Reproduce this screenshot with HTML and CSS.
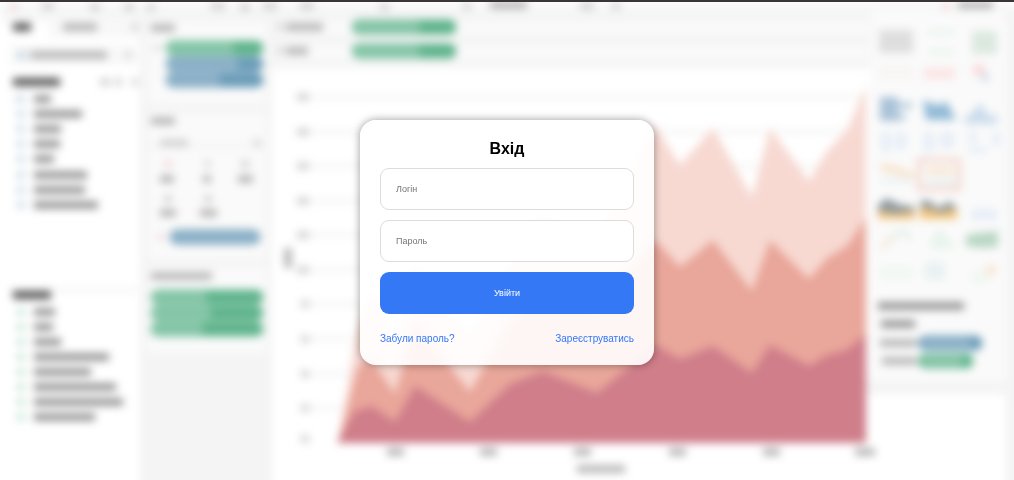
FILE: index.html
```html
<!DOCTYPE html>
<html lang="uk">
<head>
<meta charset="utf-8">
<meta name="viewport" content="width=device-width, initial-scale=1">
<title>Вхід</title>
<link rel="stylesheet" href="styles.css">
</head>
<body>
<svg class="backdrop" viewBox="0 0 1014 480" preserveAspectRatio="xMidYMid slice" aria-hidden="true">
  <defs>
    <filter id="soften" filterUnits="userSpaceOnUse" x="-20" y="-20" width="1054" height="520" color-interpolation-filters="sRGB">
      <feGaussianBlur stdDeviation="4"/>
    </filter>
  </defs>
  <g filter="url(#soften)">
  <!-- panels -->
  <path fill="#f6f6f6" d="M0 4h1014v17H0z"/>
  <path fill="#f8f8f8" d="M48 20h92v18H48zM10 45h128v20H10z"/>
  <path fill="#f4f4f4" d="M140 14h132v480H140zM270 14h602v54H270zM1006 10h20v490h-20zM866 380h148v14H866z"/>
  <path fill="#fafafa" d="M148 21h118v83H148zM148 113h118v146H148zM148 267h118v87H148zM274 21h594v14H274zM274 45h594v15H274zM870 10h134v372H870z"/>
  <path class="rule" d="M148 146h116M10 290h128M310 97h556M310 132h556M310 166h556M310 201h556M310 235h556M310 270h556M310 304h556M310 339h556M310 374h556M310 408h556"/>

  <!-- area chart -->
  <path fill="#f7d9d2" d="M338 443L357 330 375 290 395 345 415 265 470 335 540 215 597 240 655 125 680 165 713 128 752 197 770 128 809 181 827 151 847 130 866 86V443z"/>
  <path fill="#e9a69a" d="M338 443L358 366 372 360 395 394 415 322 470 392 510 320 543 290 597 310 655 240 680 267 713 240 752 291 770 240 809 279 827 258 847 246 866 218V443z"/>
  <path fill="#cf7e8a" d="M337 443L355 411 372 406 395 422 415 386 470 422 510 384 543 371 597 393 630 366 655 345 680 359 713 346 752 373 770 345 809 366 827 355 847 350 866 334V443z"/>

  <!-- field pills -->
  <path class="pill green" d="M173 48h83M359 27h90M359 51h90M158 297h98M158 313h98M158 329h98M926 361h40"/>
  <path class="pill green-light" d="M173 48h54M359 27h54M359 51h54M158 297h42M158 313h46M158 329h38M930 361h26"/>
  <path class="pill blue" d="M173 64h83M173 80h83M177 237h76M926 343h49"/>
  <path class="pill blue-light" d="M173 64h58M173 80h40M177 237h76M930 343h34"/>

  <!-- captions and lists -->
  <path class="word strong" d="M13 27h18M13 82h47M13 295h38"/>
  <path class="word" d="M34 99h17M34 114h48M34 129h27M34 144h26M34 159h20M34 175h53M34 190h51M34 205h64M34 312h21M34 327h19M34 342h27M34 357h75M34 372h57M34 387h82M34 402h89M34 417h61M878 306h86M881 324h34"/>
  <path class="word soft" d="M63 27h34M30 55h77M151 28h24M151 121h24M151 276h61M286 27h37M286 51h22M160 179h14M203 179h8M238 179h15M160 213h16M200 213h17M490 5h37M958 5h35M880 343h37M882 361h35M387 452h17M480 452h17M574 452h17M669 452h17M763 452h17M855 452h20M577 469h48M288 248v20"/>
  <path class="word faint" d="M160 143h28M254 143h6M100 82h10M115 82h7M132 82h6M126 55h5M132 27h6M277 27h6M277 51h6M155 48h4M297 97h12M297 132h12M297 166h12M297 201h12M297 235h12M297 270h12M301 304h8M301 339h8M301 374h8M301 408h8M301 439h8M42 6h12M90 7h10M124 7h10M147 7h8M211 6h14M240 7h10M263 6h14M300 6h14M380 7h9M463 6h8M580 6h14M612 6h8M241 164h8M164 199h8M204 199h8M205 164h5"/>
  <path class="field-icon blue" d="M16 99h9M17 114h8M17 129h8M17 144h8M17 159h8M17 175h8M17 190h8M17 205h8M17 55h9"/>
  <path class="field-icon green" d="M17 312h8M17 327h8M17 342h8M17 357h8M17 372h8M17 387h8M17 402h8M17 417h8"/>
  <path class="field-icon red" d="M10 6h8M164 164h8M158 237h6M942 6h8"/>

  <!-- chart type gallery -->
  <path fill="#dedede" d="M879 30h34v23h-34z"/>
  <path fill="#eaf6ee" d="M928 29h27v6h-27zM928 49h27v6h-27zM930 241h24v8h-24z"/>
  <path fill="#f1f8f3" d="M880 266h34v14h-34zM970 270h20v14h-20z"/>
  <path fill="#dbe9df" d="M972 31h25v23h-25z"/>
  <path fill="#fbe5e4" d="M924 68h31v11h-31z"/>
  <path fill="#fbd9d8" d="M973 65h12v10h-12z"/>
  <path fill="#f8f3ef" d="M880 68h32v8h-32z"/>
  <path fill="#cbdcec" d="M981 74h8v7h-8zM964 120l17-17 8 14 8-4v11h-33z"/>
  <path fill="#aac3d8" d="M880 97h18v24h-18zM898 103h14v5h-14zM898 114h7v6h-7z"/>
  <path fill="#93bbd7" d="M923 100l14 5 10-3 9 18h-30z"/>
  <path fill="#e6eef7" d="M881 132h10v20h-10zM896 132h10v18h-10zM924 132h10v20h-10zM940 132h14v16h-14zM968 132h9v10h-9zM993 132h8v14h-8zM968 147h20v6h-20zM971 209h26v11h-26z"/>
  <path fill="#f8e3cb" d="M880 164l12 1 22 8v6l-34-9zM926 168h28v6h-28zM986 266h10v8h-10z"/>
  <path fill="#e9f1f2" d="M880 178h32v5h-32zM926 178h30v7h-30zM925 262h20v18h-20z"/>
  <path fill="#f5c579" d="M878 207h37v12h-37zM920 207h37v12h-37z"/>
  <path fill="#8f999e" d="M878 205l9-7 11 6 17 3v4l-19 3-18-3zM921 200l9 1 8 7 12-7 7 8-9 2-9 2-9-4-9 0z"/>
  <path fill="none" stroke="#f3d3c9" stroke-width="4" d="M919 160h40v29h-40z"/>
  <path fill="none" stroke="#f3e2cf" stroke-width="4" d="M882 248l12-12"/>
  <path fill="none" stroke="#e4f1e8" stroke-width="5" d="M893 238l9-8 9 9M932 246l8-13 8 13"/>
  <path fill="#b9d7c4" d="M966 235l12-2 20-2v16l-16 1-16-2z"/>
  </g>
</svg>

<main class="page">
  <form class="login">
    <h1 class="title">Вхід</h1>
    <input class="field" type="text" name="login" placeholder="Логін" aria-label="Логін" autocomplete="username">
    <input class="field" type="password" name="password" placeholder="Пароль" aria-label="Пароль" autocomplete="current-password">
    <button class="submit" type="submit">Увійти</button>
    <nav class="links">
      <a href="#reset">Забули пароль?</a>
      <a href="#register">Зареєструватись</a>
    </nav>
  </form>
</main>
</body>
</html>
```
FILE: styles.css
```css
* {
  box-sizing: border-box;
}

body {
  margin: 0;
  background: #fff;
  font-family: "Liberation Sans", Arial, sans-serif;
}

/* Blurred dashboard behind the form */
.backdrop {
  position: fixed;
  inset: 0;
  width: 100%;
  height: 100%;
}

.rule {
  stroke: #f1f1f1;
  stroke-width: 3;
}

.pill {
  fill: none;
  stroke-width: 15;
  stroke-linecap: round;
}

.green { stroke: #5fb48c; }
.green-light { stroke: #84c5a7; }
.blue { stroke: #6b9cb8; }
.blue-light { stroke: #8bb0c7; }

.word {
  fill: none;
  stroke: #8c8c8c;
  stroke-width: 7;
}

.word.strong {
  stroke: #555;
  stroke-width: 8;
}

.word.soft { stroke: #b0b0b0; }
.word.faint { stroke: #cfcfcf; }

.field-icon {
  stroke-width: 7;
  opacity: 0.35;
}

.field-icon.red { stroke: #e79aa0; }

/* Login card */
.page {
  position: relative;
  display: grid;
  place-items: center;
  min-height: 100vh;
  padding: 3px 16px 0;
  border-top: 2px solid #3a3638;
}

.login {
  display: flex;
  flex-direction: column;
  gap: 10px;
  width: 100%;
  max-width: 294px;
  padding: 20px;
  border-radius: 16px;
  background: rgba(255, 255, 255, 0.9);
  box-shadow: 0 0 8px rgba(0, 0, 0, 0.4);
}

.title {
  margin: 0;
  font-size: 16px;
  font-weight: bold;
  line-height: 18px;
  text-align: center;
  color: #000;
}

.field {
  width: 100%;
  height: 42px;
  padding: 0 15px;
  border: 1px solid #dcdcdc;
  border-radius: 9px;
  background: #fff;
  font: 9px/12px "Liberation Sans", Arial, sans-serif;
  color: #222;
}

.field::placeholder {
  color: #757575;
}

.submit {
  height: 42px;
  border: 0;
  border-radius: 9px;
  background: #3478f6;
  font: 9px/12px "Liberation Sans", Arial, sans-serif;
  color: #fff;
  cursor: pointer;
}

.links {
  display: flex;
  justify-content: space-between;
  padding-top: 9px;
  font-size: 10px;
  line-height: 12px;
}

.links a {
  color: #3478f6;
  text-decoration: none;
}
```
